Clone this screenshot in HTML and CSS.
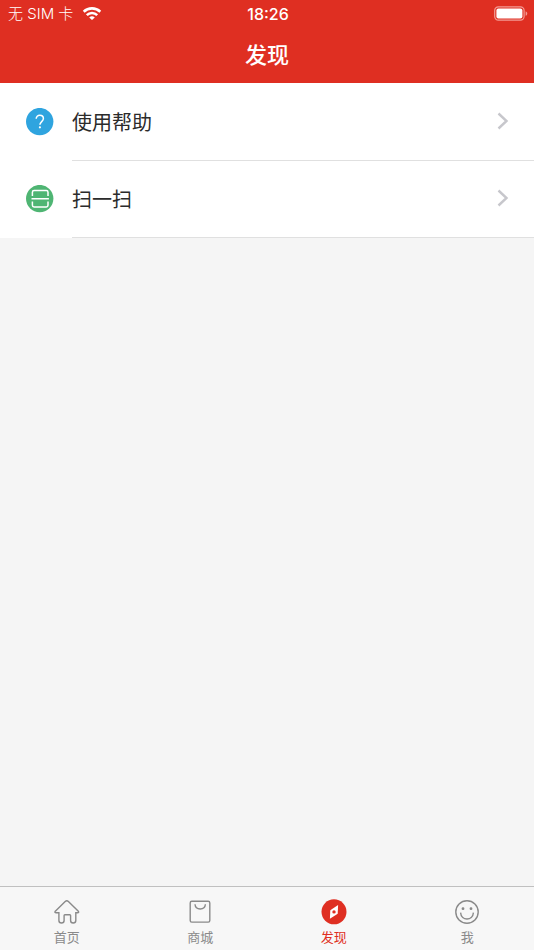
FILE: index.html
```html
<!DOCTYPE html>
<html lang="zh-CN">
<head>
<meta charset="utf-8">
<meta name="viewport" content="width=device-width, initial-scale=1">
<title>发现</title>
<link rel="stylesheet" href="styles.css">
</head>
<body>
<header class="header">
  <div class="status">
    <div class="carrier">
      <span>无 SIM 卡</span>
      <svg width="20" height="14" viewBox="0 0 20 14" fill="none" stroke="#fff" stroke-width="2.6" aria-hidden="true">
        <path d="M1.700 4.700a12 12 0 0 1 16.600 0M4.800 8.100a7.400 7.400 0 0 1 10.400 0"/>
        <path d="M10 13.100 7.200 10.500a4.100 4.100 0 0 1 5.600 0z" fill="#fff" stroke="none"/>
      </svg>
    </div>
    <time class="time">18:26</time>
    <div class="battery">
      <svg width="34" height="16" viewBox="0 0 34 16" aria-hidden="true">
        <rect x="0.700" y="0.800" width="29.400" height="13.400" rx="3.600" fill="none" stroke="#f39b94" stroke-width="1.200"/>
        <rect x="2.400" y="2.500" width="26" height="10" rx="2" fill="#fff"/>
        <path d="M31.600 5.200c2.200.8 2.200 3.800 0 4.600z" fill="#f39b94"/>
      </svg>
    </div>
  </div>
  <h1 class="title">发现</h1>
</header>
<main class="content">
  <nav class="list" aria-label="功能">
    <a class="row" href="#help">
      <svg class="row-icon" viewBox="0 0 28 28" fill="none" aria-hidden="true">
        <circle cx="13.700" cy="13.600" r="13.700" fill="#2fa4df"/>
        <path d="M10.200 10.800c0-2.200 1.500-3.600 3.600-3.600s3.600 1.400 3.600 3.300c0 3-3.500 3.200-3.500 6.300" stroke="#fff" stroke-width="1.500"/>
        <circle cx="13.900" cy="19.300" r="1.100" fill="#fff"/>
      </svg>
      <span class="row-body">使用帮助
        <svg class="chevron" viewBox="0 0 12 18" aria-hidden="true"><path d="m1.500 1.500 8 7.500-8 7.500"/></svg>
      </span>
    </a>
    <a class="row" href="#scan">
      <svg class="row-icon" viewBox="0 0 28 28" fill="none" aria-hidden="true">
        <circle cx="13.700" cy="13.600" r="13.700" fill="#4fb573"/>
        <path d="M6.400 11V7.300q0-1.700 1.700-1.700h12.200q1.700 0 1.700 1.700V11M6.400 16.400v3.900q0 1.700 1.700 1.700h12.200q1.700 0 1.700-1.700v-3.900M5.500 13.700h17.400" stroke="#fff" stroke-width="1.500"/>
      </svg>
      <span class="row-body">扫一扫
        <svg class="chevron" viewBox="0 0 12 18" aria-hidden="true"><path d="m1.500 1.500 8 7.500-8 7.500"/></svg>
      </span>
    </a>
  </nav>
</main>
<nav class="tabs" aria-label="主导航">
  <a class="tab" href="#home">
    <svg class="tab-icon" viewBox="0 0 26 26" aria-hidden="true">
      <path d="M1.300 12.200 11.200 2.400q1.600-1.500 3.200 0l9.900 9.800q1 1.500-.8 1.500H21.800v7.800q0 2.500-2.600 2.500t-2.600-2.500v-5q0-.8-.8-.8h-4.900q-.8 0-.8.8v5q0 2.500-2.600 2.500t-2.600-2.500v-7.800H2.100q-1.800 0-.8-1.500z"/>
    </svg>
    <span>首页</span>
  </a>
  <a class="tab" href="#mall">
    <svg class="tab-icon" viewBox="0 0 26 26" aria-hidden="true">
      <rect x="3.200" y="2.300" width="19.600" height="20.800" rx="1.600"/>
      <path d="M8 5.300c.5 6.200 9.900 6.200 10.400 0"/>
    </svg>
    <span>商城</span>
  </a>
  <a class="tab active" href="#discover" aria-current="page">
    <svg class="tab-icon" viewBox="0 0 26 26" aria-hidden="true">
      <circle cx="13" cy="12.800" r="12.500" fill="#df2f22" stroke="none"/>
      <path d="M17.100 6 9.300 11.200 8.900 19.800l7.800-5z" fill="#fff" stroke="none"/>
      <circle cx="13" cy="12.900" r="1.700" fill="#df2f22" stroke="none"/>
    </svg>
    <span>发现</span>
  </a>
  <a class="tab" href="#me">
    <svg class="tab-icon" viewBox="0 0 26 26" aria-hidden="true">
      <circle cx="13" cy="13" r="11.200"/>
      <path d="M6.600 13.600c.6 8.600 12.200 8.600 12.800 0"/>
      <circle cx="9" cy="9.700" r="1.400" fill="#8a8a8a" stroke="none"/>
      <circle cx="17" cy="9.700" r="1.400" fill="#8a8a8a" stroke="none"/>
    </svg>
    <span>我</span>
  </a>
</nav>
</body>
</html>
```
FILE: styles.css
```css
* {
  box-sizing: border-box;
}

body {
  display: flex;
  flex-direction: column;
  min-height: 100vh;
  margin: 0;
  background: #f5f5f5;
  color: #2b2b2b;
  font-family: Inter, "Noto Sans CJK SC", sans-serif;
}

a {
  color: inherit;
  text-decoration: none;
}

svg {
  display: block;
  flex: none;
}

.header {
  background: #df2f22;
  color: #fff;
}

.status {
  display: grid;
  grid-template-columns: 1fr auto 1fr;
  align-items: center;
  height: 28px;
  padding: 0 6px 0 8px;
  font-size: 16px;
  line-height: 28px;
}

.carrier {
  display: flex;
  align-items: center;
  gap: 9px;
  font-size: 15px;
  font-weight: 300;
}

.time {
  font-weight: 500;
}

.battery {
  justify-self: end;
}

.title {
  height: 55px;
  margin: 0;
  font-size: 22px;
  font-weight: 500;
  line-height: 54px;
  text-align: center;
}

.content {
  flex: 1;
}

.list {
  padding-top: 1px;
  background: #fff;
}

.row {
  display: flex;
  align-items: center;
  gap: 18px;
  padding-left: 26px;
}

.row-icon {
  width: 28px;
  height: 28px;
  margin-bottom: 2px;
}

.row-body {
  display: flex;
  flex: 1;
  align-items: center;
  justify-content: space-between;
  height: 77px;
  padding: 0 25px 2px 0;
  border-bottom: 1px solid #e0e0e0;
  font-size: 20px;
}

.chevron {
  width: 12px;
  height: 18px;
  fill: none;
  stroke: #c7c7cc;
  stroke-width: 2.4;
}

.tabs {
  display: flex;
  height: 64px;
  border-top: 1px solid #c0c0c0;
  background: #f7f7f7;
}

.tab {
  display: flex;
  flex: 1;
  flex-direction: column;
  align-items: center;
  gap: 2px;
  padding-top: 12px;
  color: #8a8a8a;
  font-size: 13px;
  line-height: 20px;
}

.tab.active {
  color: #df2f22;
}

.tab-icon {
  width: 26px;
  height: 26px;
  fill: none;
  stroke: #8a8a8a;
  stroke-width: 1.4;
}
```
